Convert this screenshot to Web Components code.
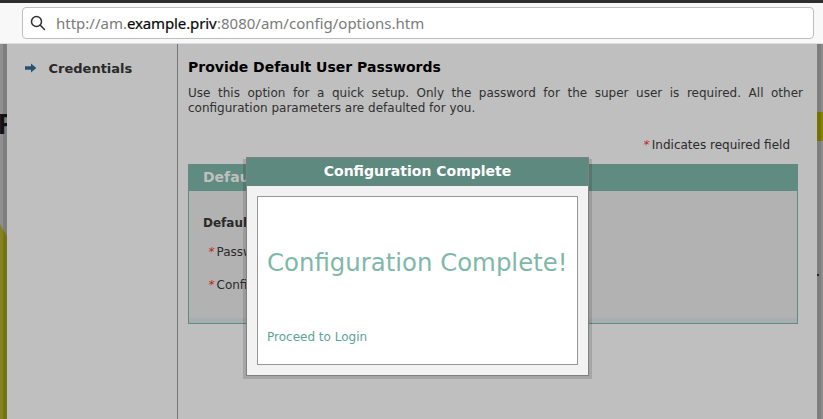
<!DOCTYPE html>
<html lang="en"><head><meta charset="utf-8"><title>Configuration options</title>
<style>
html,body{margin:0;height:100%;overflow:hidden}
body{font:12px/15px "DejaVu Sans",sans-serif;color:#2a2a2a}
</style></head><body>
<config-app></config-app>
<script>
const define=(name,html)=>customElements.define(name,class extends HTMLElement{
  constructor(){super();this.attachShadow({mode:'open'}).innerHTML=html;}
});

define('address-bar',`<style>
:host{display:block;box-sizing:border-box;height:44px;border-top:3px solid #2e2e2e;border-bottom:1px solid #dedede;background:#f8f8f8;padding:4px 9px 0 22px}
.field{box-sizing:border-box;height:32px;border:1px solid #bebebe;border-radius:4px;background:#fff;display:flex;align-items:center;padding-left:7px;color:#7b7b7b;font:15px/20px "Noto Sans",sans-serif}
svg{width:17px;height:17px;margin-right:9px;flex:none}
.url{display:flex;white-space:pre}
b{font-weight:400;color:#080808;letter-spacing:-.13px;-webkit-text-stroke:.2px #080808}
.a{width:71px}.b{width:90px}.c{width:206px}
</style><div class="field"><svg viewBox="0 0 17 17" fill="none" stroke="#303030" stroke-width="1.5" stroke-linecap="round"><circle cx="6.5" cy="6.5" r="5"/><path d="M10.3 10.3L14.5 14.5"/></svg><div class="url"><span class="a">http://am.</span><b class="b">example.priv</b><span class="c">:8080/am/config/options.htm</span></div></div>`);

define('side-step',`<style>
:host{display:flex;align-items:center;font:bold 13px/16px "DejaVu Sans",sans-serif;color:#292929}
svg{width:12px;height:10px;margin:-2px 11.5px 0 0}
</style><svg viewBox="0 0 12 10"><path d="M0 3.2h6V.6L11.3 5 6 9.4V6.8H0z" fill="#294f76"/></svg><slot></slot>`);

define('required-label',`<style>
:host{display:flex;line-height:15px}
i{color:#c01818;width:9px;font-style:normal;transform:skewX(-12deg)}
</style><i>*</i><slot></slot>`);

define('form-panel',`<style>
:host{display:block;box-sizing:border-box;width:610px;height:160px;border:1px solid #5f8b80;background:linear-gradient(#b2b2b2 0 153px,#aaadaf 153px)}
header{box-sizing:border-box;height:26px;background:#5f8b80;color:#bfbfbf;font:bold 14px/24px "DejaVu Sans",sans-serif;padding-left:14px}
.body{padding:25px 0 0 14px;display:flex;flex-direction:column}
.t{font-weight:bold;margin-bottom:14px}
required-label{margin:0 0 18px 4.5px}
</style><header><slot name="title"></slot></header><div class="body"><div class="t"><slot name="section"></slot></div><required-label>Passw</required-label><required-label>Confi</required-label></div>`);

define('page-edge',`<style>
:host{display:block;overflow:hidden;background:linear-gradient(to right,#909090 0 3px,#7e7e7e 3px)}
:host([side=right]){background:linear-gradient(to right,#7e7e7e 0 4px,#8c8c8c 4px)}
</style><slot></slot>`);

define('logo-left',`<style>:host{display:block;height:375px;position:relative}svg{display:block}span{position:absolute;left:-2px;top:65px;font:bold 29px/30px "Liberation Sans",sans-serif;color:#121212}</style>
<svg width="7" height="375"><path d="M0 180L3 185.5V375H0z" fill="#84831c"/><path d="M3 185.5L7 192V375H3z" fill="#747319"/></svg><span>F</span>`);

define('logo-right',`<style>:host{display:block}svg{display:block}</style>
<svg width="6" height="375"><path d="M0 68h4v29H0z" fill="#757300"/><path d="M4 68h2v29H4z" fill="#858200"/><path d="M0 230h2v2H0z" fill="#252830"/></svg>`);

define('complete-dialog',`<style>
:host{position:absolute;left:243px;top:159px;width:349px;height:220px;background:rgba(0,0,0,.13)}
.panel{box-sizing:border-box;width:343px;height:219px;margin:-2px 0 0 3px;border:1px solid #808080;background:#f2f2f2;display:flex;flex-direction:column}
header{height:28px;background:#5d897e;color:#fff;text-align:center;font:bold 14px/27px "DejaVu Sans",sans-serif;flex:none}
.box{box-sizing:border-box;margin:10px;height:169px;border:1px solid #969696;background:#fff;padding:50px 0 0 9px;color:#7fb8a9}
h1{font:400 24.4px/32px "DejaVu Sans",sans-serif;margin:0 0 51px;white-space:nowrap}
a{color:#5ba594;display:block}
</style><div class="panel"><header>Configuration Complete</header><div class="box"><h1>Configuration Complete!</h1><a>Proceed to Login</a></div></div>`);

define('config-app',`<style>
:host{display:block;height:419px;position:relative;z-index:0;overflow:hidden}
.page{display:grid;grid-template-columns:7px 171px 1fr 6px;height:375px;background:#bfbfbf}
nav{border-right:1px solid #747474;padding:17px 0 0 18px}
main{padding:15px 14px 0 10px}
h2{font:bold 14px/17px "DejaVu Sans",sans-serif;margin:0 0 10px;color:#000}
p{margin:0;text-align:justify;color:#303030}
.req{display:flex;justify-content:flex-end;margin:22px 13px 11px 0}
complete-dialog{z-index:2}
</style><address-bar></address-bar><div class="page"><page-edge><logo-left></logo-left></page-edge><nav><side-step>Credentials</side-step></nav><main><h2>Provide Default User Passwords</h2><p>Use this option for a quick setup. Only the password for the super user is required. All other configuration parameters are defaulted for you.</p><div class="req"><required-label>Indicates required field</required-label></div><form-panel><span slot="title">Defau</span><span slot="section">Defaul</span></form-panel></main><page-edge side="right"><logo-right></logo-right></page-edge></div><complete-dialog></complete-dialog>`);
</script></body></html>
